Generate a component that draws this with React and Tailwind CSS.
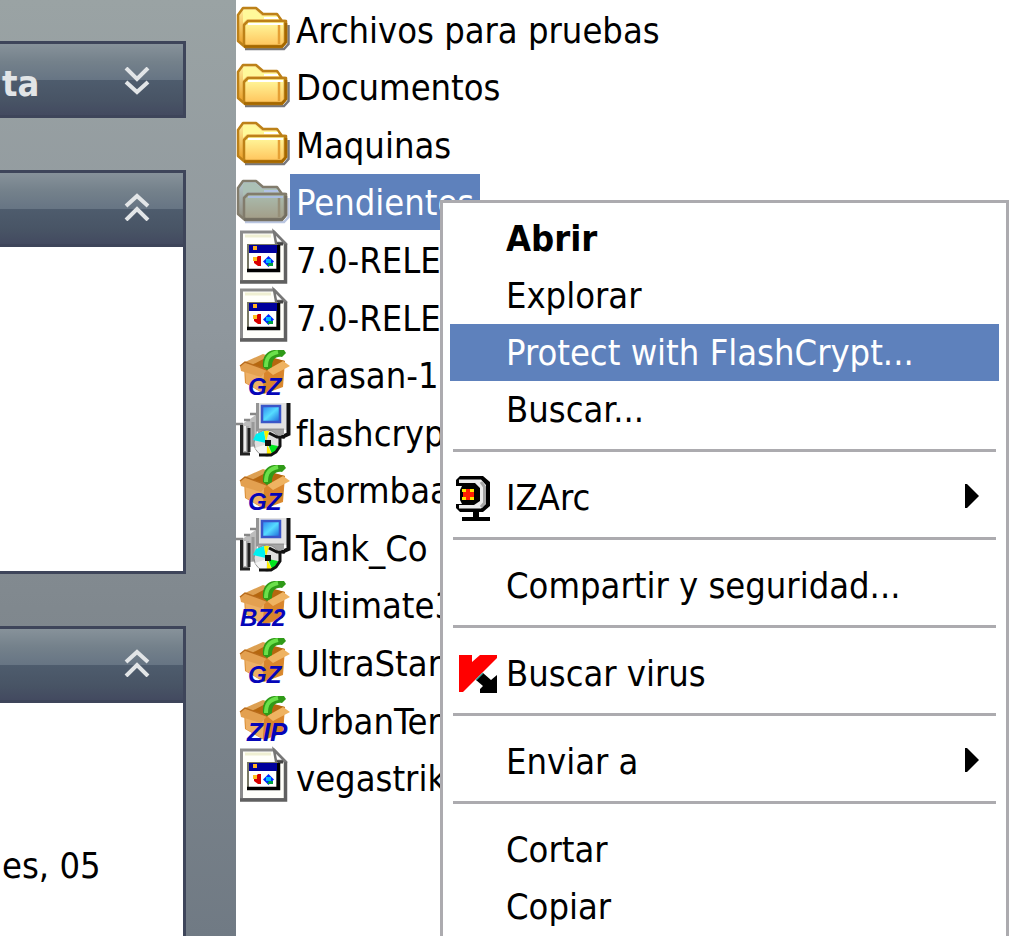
import React from "react";

function FolderIcon({ dim }) {
  const edge = dim ? "#827c6c" : "#bd8118";
  const dark = dim ? "#746f62" : "#a56800";
  const id = dim ? "dim" : "lit";
  return (
    <svg className="h-[58px] w-[54px] shrink-0 overflow-visible" viewBox="0 0 54 58" aria-hidden="true">
      <defs>
        <linearGradient id={`front-${id}`} x1="0" y1="0" x2="0" y2="1">
          <stop offset="0" stopColor={dim ? "#a9bcae" : "#fffba0"} />
          <stop offset="1" stopColor={dim ? "#a39d88" : "#ffc45c"} />
        </linearGradient>
        <linearGradient id={`side-${id}`} x1="0" y1="0" x2="0" y2="1">
          <stop offset="0" stopColor={dim ? "#b3c7cf" : "#ffeda0"} />
          <stop offset="1" stopColor={dim ? "#918c7b" : "#e89a20"} />
        </linearGradient>
      </defs>
      <path d="M9 48 H48 L52.500 43 V24" fill="none" stroke={dim ? "#a9b8da" : "#55555a"} strokeWidth="2.500" opacity="0.8" />
      <path d="M2 14 L7 7 H20 L27 13 H41 L46 20 H50 V41 L46 46 H9 L2 40 Z" fill={`url(#side-${id})`} stroke={edge} strokeWidth="2.500" strokeLinejoin="round" />
      <path d="M8 9 H19 L26 15 H41 L43 18 H11 L7 22 V10 Z" fill={dim ? "#abc0b6" : "#fff99a"} />
      <path d="M28 17 H42" stroke={dim ? "#b2c2e6" : "#fff"} strokeWidth="2" />
      <path d="M8 44 V24 L12 20 H49 V42 L46 45 H10 Z" fill={`url(#front-${id})`} stroke={edge} strokeWidth="2.500" strokeLinejoin="round" />
      <path d="M12 23 H47" stroke={dim ? "#abbde0" : "#fff"} strokeWidth="2" />
      <path d="M43 24 V43" stroke={dim ? "#968f78" : "#e5a035"} strokeWidth="2.500" />
      <path d="M8 45.500 H46 L50 41 V22" fill="none" stroke={dark} strokeWidth="2.500" />
    </svg>
  );
}

function ImageFileIcon() {
  return (
    <svg className="h-[58px] w-[54px] shrink-0 overflow-visible" viewBox="0 0 54 58" aria-hidden="true">
      <path d="M5.500 1 H38 L49.500 13 V50.500 H5.500 Z" fill="#fffffa" stroke="#8b8b8b" strokeWidth="3" />
      <path d="M49.500 13 V51 H4" fill="none" stroke="#606060" strokeWidth="3.500" />
      <path d="M9 5 H35" stroke="#efefd2" strokeWidth="3" />
      <path d="M38 1 L49 12 H40 Z" fill="#fff" stroke="#777" strokeWidth="2.500" />
      <path d="M41 13 H47" fill="none" stroke="#444" strokeWidth="3" />
      <rect x="12" y="14" width="29" height="25" fill="#fff" stroke="#777764" strokeWidth="2" />
      <path d="M42.500 14 V39.500 H11" fill="none" stroke="#000" strokeWidth="3.500" />
      <rect x="13" y="14" width="28" height="8" fill="#00009c" />
      <rect x="17" y="15" width="4" height="4" fill="#ffb020" />
      <path d="M18 29 L22 25 H25 V35 H22 L18 32 Z" fill="#d80000" />
      <rect x="17" y="26" width="4" height="4" fill="#ffc020" />
      <path d="M32.500 25 L38 30.500 L32.500 36 L27 30.500 Z" fill="#0028ff" />
      <rect x="30" y="28" width="5" height="4" fill="#00b8ff" />
      <path d="M33 32 H37 V35 H31 Z" fill="#00a040" />
    </svg>
  );
}

function ArchiveIcon({ kind }) {
  const x = { GZ: 12, BZ2: 4, ZIP: 11 }[kind];
  return (
    <svg className="h-[58px] w-[54px] shrink-0 overflow-visible" viewBox="0 0 54 58" aria-hidden="true">
      <path d="M8 20 L27 10 L49 15 L47 41 L28 48 L9 37 Z" fill="#da8c32" />
      <path d="M10 17 L27 9 L49 15 L31 25 Z" fill="#b5670f" />
      <path d="M9 16 L27 8 L33 10 L14 20 Z" fill="#dda052" />
      <path d="M9 22 L29 27 L27 47 L10 37 Z" fill="#edb066" />
      <path d="M28 27 L48 21 L46 40 L27 47 Z" fill="#d9852c" />
      <path d="M4 20 L9 16 L31 24 L25 31 L5 25 Z" fill="#e3a050" />
      <path d="M4 20 L9 16 L31 24" fill="none" stroke="#b96c1c" strokeWidth="1.500" />
      <path d="M31 24 L47 15 L54 20 L37 29 Z" fill="#efb361" />
      <path d="M27 21 C26 10 31 5 38 4 L48 4 L50 7 L46 11 C39 10 36 14 36 21 L31 24 Z" fill="#2f9a18" />
      <path d="M30 21 C30 12 33 8 42 6" fill="none" stroke="#6be04a" strokeWidth="4" />
      <text
        x={x}
        y="49"
        className={
          kind === "ZIP"
            ? "fill-[#0505b8] font-['Liberation_Sans',sans-serif] text-[26px] font-bold italic"
            : "fill-[#0505b8] font-['Liberation_Sans',sans-serif] text-[24px] font-bold italic"
        }
      >
        {kind}
      </text>
    </svg>
  );
}

function InstallerIcon() {
  return (
    <svg className="h-[58px] w-[54px] shrink-0 overflow-visible" viewBox="0 0 54 58" aria-hidden="true">
      <defs>
        <linearGradient id="screen" x1="0" y1="0" x2="1" y2="1">
          <stop offset="0" stopColor="#2f7ff0" />
          <stop offset="0.5" stopColor="#55dcff" />
          <stop offset="1" stopColor="#1c62d8" />
        </linearGradient>
      </defs>
      <path d="M6 20 L14 15 L21 10 V43 H6 Z" fill="#bdbdbd" />
      <path d="M0 20 H7 M8 16 H14 M14 10 H22" stroke="#888" strokeWidth="2.500" />
      <rect x="21" y="-1" width="30" height="27" fill="#e2e2e2" />
      <path d="M21.500 -1 V26 H48" fill="none" stroke="#959595" strokeWidth="3" />
      <rect x="26" y="2" width="18" height="16" fill="url(#screen)" stroke="#3a56c8" strokeWidth="2.500" />
      <path d="M52.500 -1 V30 L46 33" fill="none" stroke="#111" strokeWidth="4" />
      <rect x="22" y="26" width="26" height="5" fill="#a4a4a4" />
      <rect x="6" y="22" width="7" height="28" fill="#aaa" />
      <path d="M5.500 21 V50 H14 M13 24 V48" fill="none" stroke="#222" strokeWidth="3" />
      <path d="M9 22 V47" stroke="#eee" strokeWidth="2" />
      <path d="M17 18 V42" stroke="#999" strokeWidth="3" />
      <circle cx="31" cy="39" r="13" fill="#dedede" stroke="#8a8a8a" strokeWidth="1" />
      <path d="M30 39 L17 36 L20 30 L28 27 Z" fill="#00f0f0" />
      <path d="M30 38 L28 27 L33 27 Z" fill="#f5f000" />
      <path d="M32 40 L42 42 L40 48 L36 50 Z" fill="#00e51e" />
      <path d="M31 41 L36 50 L31 51 Z" fill="#fff000" />
      <path d="M31 40 L19 44 L24 50 L30 51 Z" fill="#f5f5f5" />
      <rect x="29" y="36" width="6" height="6" fill="#111" />
      <path d="M33 29 L41 33 H49 M44 34 V42 L40 48 L35 51 H23" fill="none" stroke="#111" strokeWidth="3" />
    </svg>
  );
}

function ClampIcon() {
  return (
    <svg className="h-[57px] w-14 shrink-0" viewBox="0 0 56 57" aria-hidden="true">
      <path d="M10 7 H33 L40 13 V37 L33 43 H10 L6 39 V35 H12 L10 31 V21 L12 17 H6 V11 Z" fill="#000" />
      <path d="M9 10.500 H31 L36 16 V35 L31 39.500 H9 V36 H24 L30 32 V19 L25 14 H9 Z" fill="#ececec" />
      <path d="M31 13 L34.500 18 V34 L31 38" fill="none" stroke="#a5a5a5" strokeWidth="3" />
      <rect x="13" y="20" width="11" height="11" fill="#ff1c00" />
      <path d="M12 20 H16 V23 H12 Z M20 20 H24 V23 H20 Z M12 28 H16 V31 H12 Z M20 28 H24 V31 H20 Z" fill="#ffe600" />
      <path d="M26 42 V49" stroke="#000" strokeWidth="6" />
      <path d="M12 50 H40" stroke="#000" strokeWidth="4" />
    </svg>
  );
}

function AntivirusIcon() {
  return (
    <svg className="h-[57px] w-14 shrink-0" viewBox="0 0 56 57" aria-hidden="true">
      <path d="M9 10 H22 V17 L30 10 H47 V13 L13 47 H9 Z" fill="#ff0000" />
      <path d="M26 35 L33 28 L41 35 L47 30 V48 H30 V44 L33 41 Z" fill="#000" />
      <path d="M26 35 L33 28" stroke="#3aa39b" strokeWidth="1.500" />
    </svg>
  );
}

function Chevrons({ up }) {
  return (
    <svg className="h-7 w-[26px]" viewBox="0 0 26 28" fill="none" stroke="#e2e5e7" strokeWidth="4" aria-hidden="true">
      {up ? (
        <path d="M2 13 L13 3 L24 13 M2 27 L13 16 L24 27" />
      ) : (
        <path d="M2 1 L13 12 L24 1 M2 15 L13 25 L24 15" />
      )}
    </svg>
  );
}

function PanelHeader({ title, up }) {
  return (
    <button
      type="button"
      aria-label={title ? undefined : "Contraer panel"}
      className={`flex h-[77px] w-full items-center justify-between border-t-3 border-r-3 border-b-3 border-[#3e455a] bg-[linear-gradient(#87929a_0%,#74818b_25%,#677584_50%,#4e5c6d_51%,#485465_80%,#434a60_100%)] pr-[33px] pl-[2px] ${up ? "pb-1" : "pt-[2px]"}`}
    >
      <span className="pt-[6px] font-bold text-[#e2e5e7]">{title}</span>
      <Chevrons up={up} />
    </button>
  );
}

const files = [
  ["Archivos para pruebas", <FolderIcon />],
  ["Documentos", <FolderIcon />],
  ["Maquinas", <FolderIcon />],
  ["Pendientes", <FolderIcon dim />, true],
  ["7.0-RELE", <ImageFileIcon />],
  ["7.0-RELE", <ImageFileIcon />],
  ["arasan-1", <ArchiveIcon kind="GZ" />],
  ["flashcryp", <InstallerIcon />],
  ["stormbaa", <ArchiveIcon kind="GZ" />],
  ["Tank_Co", <InstallerIcon />],
  ["Ultimate3", <ArchiveIcon kind="BZ2" />],
  ["UltraStar", <ArchiveIcon kind="GZ" />],
  ["UrbanTer", <ArchiveIcon kind="ZIP" />],
  ["vegastrik", <ImageFileIcon />],
];

function MenuItem({ label, icon, bold, active, submenu }) {
  return (
    <button
      type="button"
      role="menuitem"
      className={`flex h-[57px] w-full shrink-0 items-center pr-5 text-left ${active ? "bg-[#5e81bc] text-white" : ""} ${bold ? "font-bold" : ""}`}
    >
      {icon || <span className="w-14 shrink-0" />}
      <span className="grow whitespace-nowrap">{label}</span>
      {submenu && (
        <svg className="mb-1 h-6 w-[14px]" viewBox="0 0 14 24" aria-hidden="true">
          <path d="M0 0 H2 L14 12 L2 24 H0 Z" />
        </svg>
      )}
    </button>
  );
}

function Separator() {
  return <div role="separator" className="mx-[3px] mt-[11px] mb-[17px] h-[3px] shrink-0 bg-[#acabaf]" />;
}

export default function App() {
  return (
    <div className="relative flex min-h-screen overflow-hidden bg-white font-['DejaVu_Sans_Condensed','Noto_Sans',sans-serif] text-[36px] leading-[42px] text-black [font-variant-ligatures:none]">
      <aside className="flex w-[236px] shrink-0 flex-col gap-[52px] bg-[linear-gradient(#9aa3a4,#8f979d_35%,#80888e_65%,#707a84)] pt-[41px] pr-[50px]">
        <PanelHeader title="ta" />
        <section>
          <PanelHeader up />
          <div className="h-[327px] border-r-3 border-b-3 border-[#3e455a] bg-white" />
        </section>
        <section className="flex grow flex-col">
          <PanelHeader up />
          <div className="grow border-r-3 border-[#3e455a] bg-white pt-[142px] pl-[2px]">
            <p>es, 05</p>
          </div>
        </section>
      </aside>

      <main className="min-w-0 grow">
        <ul className="grid h-[807px] auto-rows-fr pt-px">
          {files.map(([name, icon, selected], i) => (
            <li key={i} className="flex min-h-0 items-center">
              {icon}
              <span
                className={`px-[6px] pt-[2px] leading-[54px] whitespace-nowrap ${selected ? "bg-[#5e81bc] text-white" : ""}`}
              >
                {name}
              </span>
            </li>
          ))}
        </ul>
      </main>

      <div
        role="menu"
        className="absolute top-[200px] bottom-0 left-[440px] flex w-[569px] flex-col overflow-hidden border-3 border-b-0 border-[#acabaf] bg-white px-[7px] pt-[7px]"
      >
        <MenuItem label="Abrir" bold />
        <MenuItem label="Explorar" />
        <MenuItem label="Protect with FlashCrypt..." active />
        <MenuItem label="Buscar..." />
        <Separator />
        <MenuItem label="IZArc" icon={<ClampIcon />} submenu />
        <Separator />
        <MenuItem label="Compartir y seguridad..." />
        <Separator />
        <MenuItem label="Buscar virus" icon={<AntivirusIcon />} />
        <Separator />
        <MenuItem label="Enviar a" submenu />
        <Separator />
        <MenuItem label="Cortar" />
        <MenuItem label="Copiar" />
      </div>
    </div>
  );
}
